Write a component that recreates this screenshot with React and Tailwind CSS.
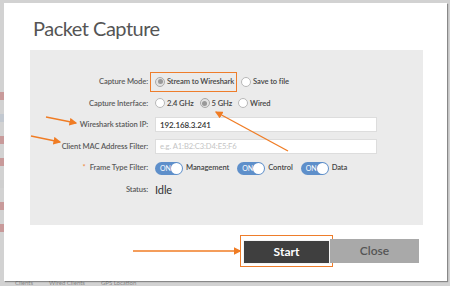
import React from "react";

const Radio = ({ checked }) => (
  <span
    className={`flex h-[10px] w-[10px] shrink-0 items-center justify-center rounded-full border ${
      checked ? "border-[#a9a9a9] bg-[#e2e2e2]" : "border-[#b8b8b8] bg-white"
    }`}
  >
    {checked && <span className="h-[5px] w-[5px] rounded-full bg-[#999]" />}
  </span>
);

const RadioOption = ({ checked, label }) => (
  <span className="flex items-center gap-[2px]">
    <Radio checked={checked} />
    <span>{label}</span>
  </span>
);

const Toggle = ({ label }) => (
  <span className="flex items-center gap-[3px]">
    <span className="flex h-[13px] w-[28px] items-center justify-between rounded-full bg-[#5e8fca] pl-[5px] pr-[1px]">
      <span className="text-[7px] font-normal text-white">ON</span>
      <span className="h-[11px] w-[11px] rounded-full bg-white" />
    </span>
    <span>{label}</span>
  </span>
);

const Row = ({ label, required, children }) => (
  <div className="grid h-[21.6px] grid-cols-[118px_1fr] items-center gap-[7px]">
    <div className="text-right text-[#5a5a5a]">
      {required && <span className="mr-[4px] text-[#f08a3c]">*</span>}
      {label}
    </div>
    <div className="flex items-center">{children}</div>
  </div>
);

const Arrows = () => (
  <svg className="pointer-events-none absolute left-0 top-0" width="450" height="286">
    <defs>
      <marker id="head" markerWidth="6" markerHeight="6" refX="5" refY="3" orient="auto">
        <path d="M0,0 L6,3 L0,6 Z" fill="#f07c24" />
      </marker>
    </defs>
    <g stroke="#f07c24" strokeWidth="1.3" fill="none">
      <line x1="46" y1="117" x2="76" y2="123" markerEnd="url(#head)" />
      <line x1="31" y1="136" x2="60" y2="142" markerEnd="url(#head)" />
      <line x1="288" y1="151" x2="216" y2="112" markerEnd="url(#head)" />
      <line x1="133" y1="251" x2="240" y2="251" markerEnd="url(#head)" />
    </g>
  </svg>
);

export default function App() {
  return (
    <div
      className="relative h-[286px] w-[450px] overflow-hidden bg-[#d2d2d2]"
      style={{ fontFamily: "Lato, 'Open Sans', sans-serif" }}
    >
      {/* page behind the dialog */}
      <div className="absolute left-0 top-[92px] flex w-[4px] flex-col gap-[14px]">
        <div className="h-[8px] bg-[#c89a9a]" />
        <div className="h-[8px] bg-[#c2c8d0]" />
        <div className="h-[8px] bg-[#c89a9a]" />
        <div className="h-[8px] bg-[#c89a9a]" />
        <div className="h-[8px] bg-[#cfcfcf]" />
        <div className="h-[8px] bg-[#c89a9a]" />
        <div className="h-[8px] bg-[#c89a9a]" />
      </div>
      <div className="absolute left-[15px] top-[280px] flex gap-[16px] text-[6px] leading-[6px] text-[#8a8a8a]">
        <span>Clients</span>
        <span>Wired Clients</span>
        <span>GPS Location</span>
      </div>

      {/* dialog */}
      <div className="absolute left-[4px] top-[3px] flex h-[278px] w-[443px] flex-col bg-white shadow-[1px_1px_1px_rgba(0,0,0,0.35)]">
        <h1 className="ml-[29px] mt-[13px] text-[20px] leading-[24px] tracking-[-0.5px] text-[#555]">Packet Capture</h1>

        <div className="ml-[26px] mt-[10px] h-[175px] w-[393px] bg-[#ebebeb] pt-[21px] text-[7.6px] font-semibold tracking-[-0.1px] text-[#444]">
          <Row label="Capture Mode:">
            <div className="flex items-center gap-[4px]">
              <span className="-ml-[5px] flex h-[20px] items-center gap-[2px] border-[1.5px] border-[#ee7d2b] pl-[4px] pr-[2px]">
                <Radio checked />
                <span>Stream to Wireshark</span>
              </span>
              <RadioOption label="Save to file" />
            </div>
          </Row>
          <Row label="Capture Interface:">
            <div className="flex items-center gap-[6px]">
              <RadioOption label="2.4 GHz" />
              <RadioOption checked label="5 GHz" />
              <RadioOption label="Wired" />
            </div>
          </Row>
          <Row label="Wireshark station IP:">
            <div className="flex h-[15px] w-[222px] items-center border border-[#ddd] bg-white px-[4px] text-[8px] text-[#333]">
              192.168.3.241
            </div>
          </Row>
          <Row label="Client MAC Address Filter:">
            <div className="flex h-[15px] w-[222px] items-center border border-[#ddd] bg-white px-[4px] font-normal text-[#c4c4c4]">
              e.g. A1:B2:C3:D4:E5:F6
            </div>
          </Row>
          <Row label="Frame Type Filter:" required>
            <div className="flex items-center gap-[8px]">
              <Toggle label="Management" />
              <Toggle label="Control" />
              <Toggle label="Data" />
            </div>
          </Row>
          <Row label="Status:">
            <span className="text-[11px] font-normal text-[#333]">Idle</span>
          </Row>
        </div>

        <div className="ml-[236px] mt-[10px] flex items-center">
          <div className="border-[1.5px] border-[#ee7d2b] p-[2px]">
            <button className="h-[24px] w-[87px] border border-[#f5f5f5] bg-[#3f3f3f] text-[12px] font-bold text-white">
              Start
            </button>
          </div>
          <button className="-ml-[3px] h-[24px] w-[89px] bg-[#a9a9a9] text-[12px] font-semibold text-[#555]">
            Close
          </button>
        </div>
      </div>

      <Arrows />
    </div>
  );
}
